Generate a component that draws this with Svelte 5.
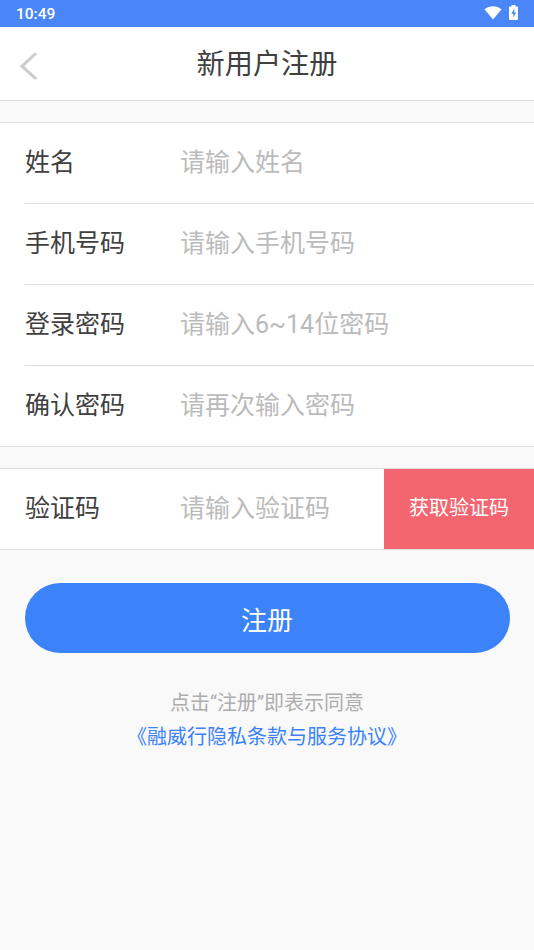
<script>
  const fields = [
    { id: 'name', label: '姓名', placeholder: '请输入姓名', type: 'text' },
    { id: 'phone', label: '手机号码', placeholder: '请输入手机号码', type: 'tel' },
    { id: 'password', label: '登录密码', placeholder: '请输入6~14位密码', type: 'password' },
    { id: 'confirm', label: '确认密码', placeholder: '请再次输入密码', type: 'password' }
  ]

  let form = { name: '', phone: '', password: '', confirm: '', code: '' }

  function updateField(id, value) {
    form = { ...form, [id]: value }
  }
</script>

<div class="page">
  <div class="status-bar">
    <span>10:49</span>
    <div class="status-icons">
      <svg width="18" height="14" viewBox="0 0 18 14" aria-hidden="true">
        <path d="M0.5 3.2C5.5-.8 12.5-.8 17.5 3.2L9 13.6Z" fill="#fff" />
      </svg>
      <svg width="9" height="15" viewBox="0 0 9 15" aria-hidden="true">
        <path d="M2.5 0h4v1.5H8q1 0 1 1V14q0 1-1 1H1q-1 0-1-1V2.5q0-1 1-1h1.5z" fill="#fff" />
        <path d="M5.3 3.8L2.3 8.8h2v3.7l2.8-5H5.3z" fill="#4b86f8" />
      </svg>
    </div>
  </div>

  <header>
    <button class="back-button" type="button" aria-label="返回">
      <svg width="18" height="28" viewBox="0 0 18 28" aria-hidden="true">
        <path
          d="M15.2 2L2 14.200l13.200 11.900"
          fill="none"
          stroke="#ccc"
          stroke-width="3"
          stroke-linecap="round"
        />
      </svg>
    </button>
    <h1>新用户注册</h1>
  </header>

  <form on:submit|preventDefault>
    <section class="group">
      {#each fields as field}
        <div class="row">
          <label for={field.id}>{field.label}</label>
          <input
            id={field.id}
            type={field.type}
            placeholder={field.placeholder}
            value={form[field.id]}
            on:input={(event) => updateField(field.id, event.target.value)}
          />
        </div>
      {/each}
    </section>

    <section class="group">
      <div class="row">
        <label for="code">验证码</label>
        <input id="code" type="text" placeholder="请输入验证码" bind:value={form.code} />
        <button class="code-button" type="button">获取验证码</button>
      </div>
    </section>

    <button class="submit-button" type="submit">注册</button>
  </form>

  <div class="agreement">
    <p>点击“注册”即表示同意</p>
    <button type="button">《融威行隐私条款与服务协议》</button>
  </div>
</div>

<style>
  :global(body) {
    background: #f9f9f9;
  }

  .page {
    min-height: 950px;
    background: #f9f9f9;
    font-family: Roboto, 'Noto Sans CJK SC', sans-serif;
  }

  .page * {
    box-sizing: border-box;
  }

  button {
    padding: 0;
    border: 0;
    background: transparent;
    font: inherit;
    cursor: pointer;
  }

  .status-bar {
    display: flex;
    align-items: center;
    justify-content: space-between;
    height: 27px;
    padding: 0 16px;
    background: #4b86f8;
    color: #fff;
    font-size: 15.5px;
    font-weight: 500;
  }

  .status-icons {
    display: flex;
    align-items: center;
    gap: 7px;
    margin-top: -2px;
  }

  svg {
    display: block;
  }

  header {
    display: grid;
    grid-template-columns: 60px 1fr 60px;
    align-items: center;
    height: 74px;
    border-bottom: 1px solid #ddd;
    background: #fff;
  }

  .back-button {
    padding: 3px 0 0 20px;
  }

  h1 {
    margin: 0;
    padding-top: 2px;
    color: #404040;
    font-size: 28.2px;
    font-weight: 400;
    line-height: 72px;
    text-align: center;
  }

  .group {
    margin-top: 21px;
    padding-left: 25px;
    border-top: 1px solid #ddd;
    border-bottom: 1px solid #ddd;
    background: #fff;
  }

  .row {
    display: flex;
    align-items: center;
    height: 80px;
  }

  .row + .row {
    height: 81px;
    border-top: 1px solid #ddd;
  }

  label {
    flex: 0 0 155px;
    color: #404040;
    font-size: 25px;
    line-height: 78px;
  }

  input {
    flex: 1;
    min-width: 0;
    height: 78px;
    padding: 0 0 2px;
    border: 0;
    background: transparent;
    color: #404040;
    font: inherit;
    font-size: 25px;
    outline: none;
  }

  input::placeholder {
    color: #bbb;
    opacity: 1;
  }

  .code-button {
    flex: 0 0 150px;
    height: 80px;
    padding-bottom: 5px;
    background: #f3656f;
    color: #fff;
    font-size: 20px;
  }

  .submit-button {
    display: block;
    width: 485px;
    height: 70px;
    margin: 33px auto 0;
    border-radius: 35px;
    background: #3c82f9;
    color: #fff;
    font-size: 26px;
  }

  .agreement {
    margin-top: 33px;
    color: #adadad;
    font-size: 20px;
    line-height: 34px;
    text-align: center;
  }

  .agreement p {
    margin: 0;
  }

  .agreement button {
    color: #3c82f9;
  }
</style>
